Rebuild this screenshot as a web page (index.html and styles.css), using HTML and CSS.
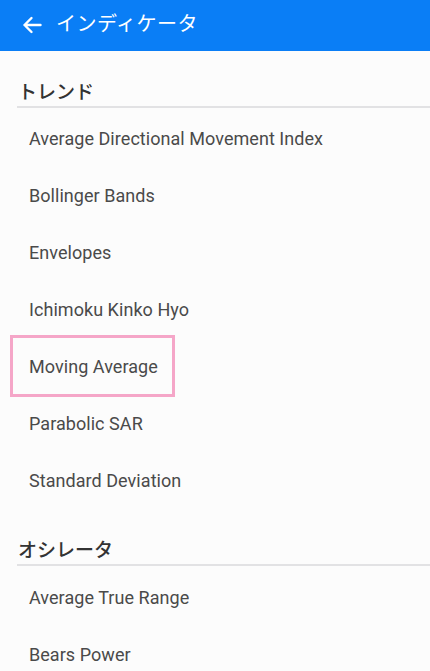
FILE: index.html
```html
<!DOCTYPE html>
<html lang="ja">
<head>
<meta charset="utf-8">
<title>インディケータ</title>
<link rel="stylesheet" href="styles.css">
</head>
<body>
<header class="appbar">
  <svg class="back" width="20" height="18" viewBox="0 0 20 18" aria-hidden="true">
    <path d="M18.5 9H2.5M9.5 2L2.5 9l7 7" fill="none" stroke="#fff" stroke-width="2.4" stroke-linecap="round" stroke-linejoin="round"/>
  </svg>
  <h1 class="title">インディケータ</h1>
</header>
<main>
  <section class="group">
    <h2 class="group-title">トレンド</h2>
    <ul class="list">
      <li class="item">Average Directional Movement Index</li>
      <li class="item">Bollinger Bands</li>
      <li class="item">Envelopes</li>
      <li class="item">Ichimoku Kinko Hyo</li>
      <li class="item"><span class="mark">Moving Average</span></li>
      <li class="item">Parabolic SAR</li>
      <li class="item">Standard Deviation</li>
    </ul>
  </section>
  <section class="group">
    <h2 class="group-title">オシレータ</h2>
    <ul class="list">
      <li class="item">Average True Range</li>
      <li class="item">Bears Power</li>
    </ul>
  </section>
</main>
</body>
</html>
```
FILE: styles.css
```css
* { box-sizing: border-box; }
html, body { margin: 0; padding: 0; }
body {
  background: #fcfcfc;
  font-family: Roboto, "Noto Sans CJK JP", sans-serif;
  color: #444;
  overflow: hidden;
  height: 671px;
}
.appbar {
  height: 51px;
  background: #0a7ef6;
  display: flex;
  align-items: center;
  padding-left: 22px;
  gap: 14px;
}
.back { display: block; margin-top: -2px; }
.title {
  margin: 0;
  font-size: 20px;
  font-weight: 400;
  color: #fff;
  font-family: "Noto Sans CJK JP", sans-serif;
  line-height: 24px;
  margin-top: -5px;
  letter-spacing: 0.5px;
}
.group { padding-left: 17px; }
.group:first-child { padding-top: 28px; }
.group + .group { margin-top: 28px; }
.group-title {
  margin: 0;
  font-family: "Noto Sans CJK JP", sans-serif;
  font-size: 19px;
  font-weight: 500;
  color: #333;
  line-height: 24px;
  padding-left: 1px;
  padding-bottom: 3px;
  border-bottom: 2px solid #e2e2e4;
}
.list { list-style: none; margin: 0; padding: 0; }
.item {
  height: 57px;
  display: flex;
  align-items: center;
  font-size: 18px;
  letter-spacing: 0.05px;
  color: #4a4a4a;
  padding-left: 12px;
}
.group:first-child .list { padding-top: 2px; }
.group + .group .list { padding-top: 3px; }
.mark { position: relative; }
.mark::before {
  content: "";
  position: absolute;
  left: -19px;
  right: -17px;
  top: -21px;
  bottom: -20px;
  border: 3.5px solid #f5a6c8;
}
```
